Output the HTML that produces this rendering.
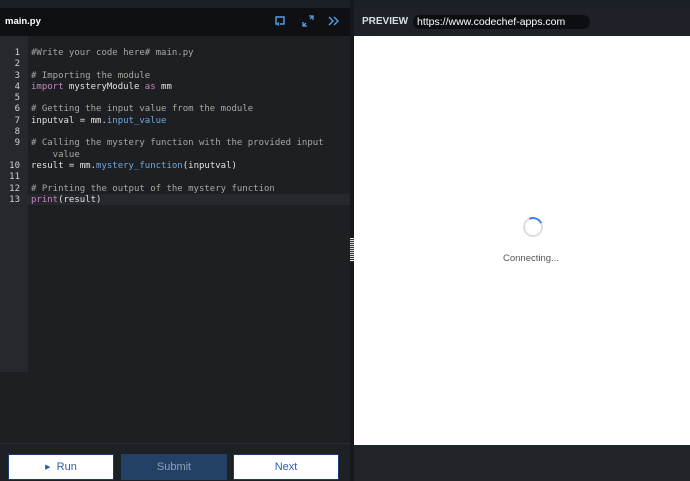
<!DOCTYPE html>
<html><head><style>
*{margin:0;padding:0;box-sizing:border-box}
body{width:690px;height:481px;background:#1c2026;position:relative;overflow:hidden;font-family:"Liberation Sans",sans-serif}
.abs{position:absolute}
.code{font-family:"DejaVu Sans Mono","Liberation Mono",monospace;font-size:9px;line-height:11.3px;color:#e0e0e0;white-space:pre}
.ln{font-family:"DejaVu Sans Mono",monospace;font-size:9px;line-height:11.3px;color:#d0d0d0;text-align:right;width:20px;white-space:pre}
.c{color:#a8a8a0}.k{color:#c586c0}.f{color:#6fa8dc}
.btn{position:absolute;top:454px;height:26px;font-size:11px;font-weight:bold;display:flex;align-items:center;justify-content:center}
</style></head><body>
<div class="abs" style="left:0;top:0;width:690px;height:8px;background:#1b2027"></div>
<div class="abs" style="left:0;top:8px;width:350px;height:28px;background:#0e1013"></div>
<div class="abs" style="left:5px;top:16px;color:#fff;font-size:9.5px;font-weight:bold">main.py</div>
<svg class="abs" style="left:274px;top:15px" width="12" height="12" viewBox="0 0 12 12"><path d="M3 9H2V2h8v7H6M5 7.5L3.5 9 5 10.5" fill="none" stroke="#5b9ee6" stroke-width="1.4"/></svg>
<svg class="abs" style="left:302px;top:15px" width="12" height="12" viewBox="0 0 12 12"><path d="M7 1h4v4M11 1L8 4M5 11H1V7M1 11l3-3" fill="none" stroke="#5b9ee6" stroke-width="1.3"/></svg>
<svg class="abs" style="left:328px;top:16px" width="12" height="10" viewBox="0 0 12 10"><path d="M1 1l4 4-4 4M6 1l4 4-4 4" fill="none" stroke="#5b9ee6" stroke-width="1.4"/></svg>
<div class="abs" style="left:0;top:36px;width:350px;height:407px;background:#1e1f23"></div>
<div class="abs" style="left:0;top:36px;width:28px;height:336px;background:#26282d"></div>
<div class="abs" style="left:28px;top:194px;width:322px;height:11px;background:#26282d"></div>
<div class="abs ln" style="left:0;top:48px">1
2
3
4
5
6
7
8
9

10
11
12
13</div>
<div class="abs code" style="left:31px;top:48px"><span class="c">#Write your code here# main.py</span>

<span class="c"># Importing the module</span>
<span class="k">import</span> mysteryModule <span class="k">as</span> mm

<span class="c"># Getting the input value from the module</span>
inputval = mm.<span class="f">input_value</span>

<span class="c"># Calling the mystery function with the provided input
    value</span>
result = mm.<span class="f">mystery_function</span>(inputval)

<span class="c"># Printing the output of the mystery function</span>
<span class="k">print</span>(result)</div>
<div class="abs" style="left:350px;top:0;width:4px;height:481px;background:#15181c"></div>
<div class="abs" style="left:350px;top:238px;width:4px;height:24px;background:repeating-linear-gradient(#ddd 0 1px,#333 1px 2px)"></div>
<div class="abs" style="left:0;top:443px;width:350px;height:38px;background:#1d2025;border-top:1px solid #2a2d33"></div>
<div class="btn" style="left:8px;width:106px;background:#fff;color:#2a5fa8;border:1px solid #1a3c6e;font-weight:normal"><span style="font-size:7px">▶</span>&nbsp;&nbsp;Run</div>
<div class="btn" style="left:121px;width:106px;background:#234166;color:#8fa1b6;font-weight:normal">Submit</div>
<div class="btn" style="left:233px;width:106px;background:#fff;color:#2a5fa8;border:1px solid #1a3c6e;font-weight:normal">Next</div>
<div class="abs" style="left:354px;top:8px;width:336px;height:28px;background:#1e2228"></div>
<div class="abs" style="left:362px;top:16px;color:#d8dde4;font-size:10px;font-weight:bold">PREVIEW</div>
<div class="abs" style="left:413px;top:15px;width:177px;height:14px;background:#0c0e11;border-radius:7px;color:#fff;font-size:10.5px;line-height:14px;padding-left:4px">https://www.codechef-apps.com</div>
<div class="abs" style="left:354px;top:36px;width:336px;height:409px;background:#fff"></div>
<div class="abs" style="left:523px;top:217px;width:20px;height:20px;border-radius:50%;border:2px solid #dcdcdc;border-top-color:#3b82e6;transform:rotate(20deg)"></div>
<div class="abs" style="left:503px;top:253px;color:#555;font-size:9.5px">Connecting...</div>
<div class="abs" style="left:354px;top:445px;width:336px;height:36px;background:#202429"></div>
</body></html>
